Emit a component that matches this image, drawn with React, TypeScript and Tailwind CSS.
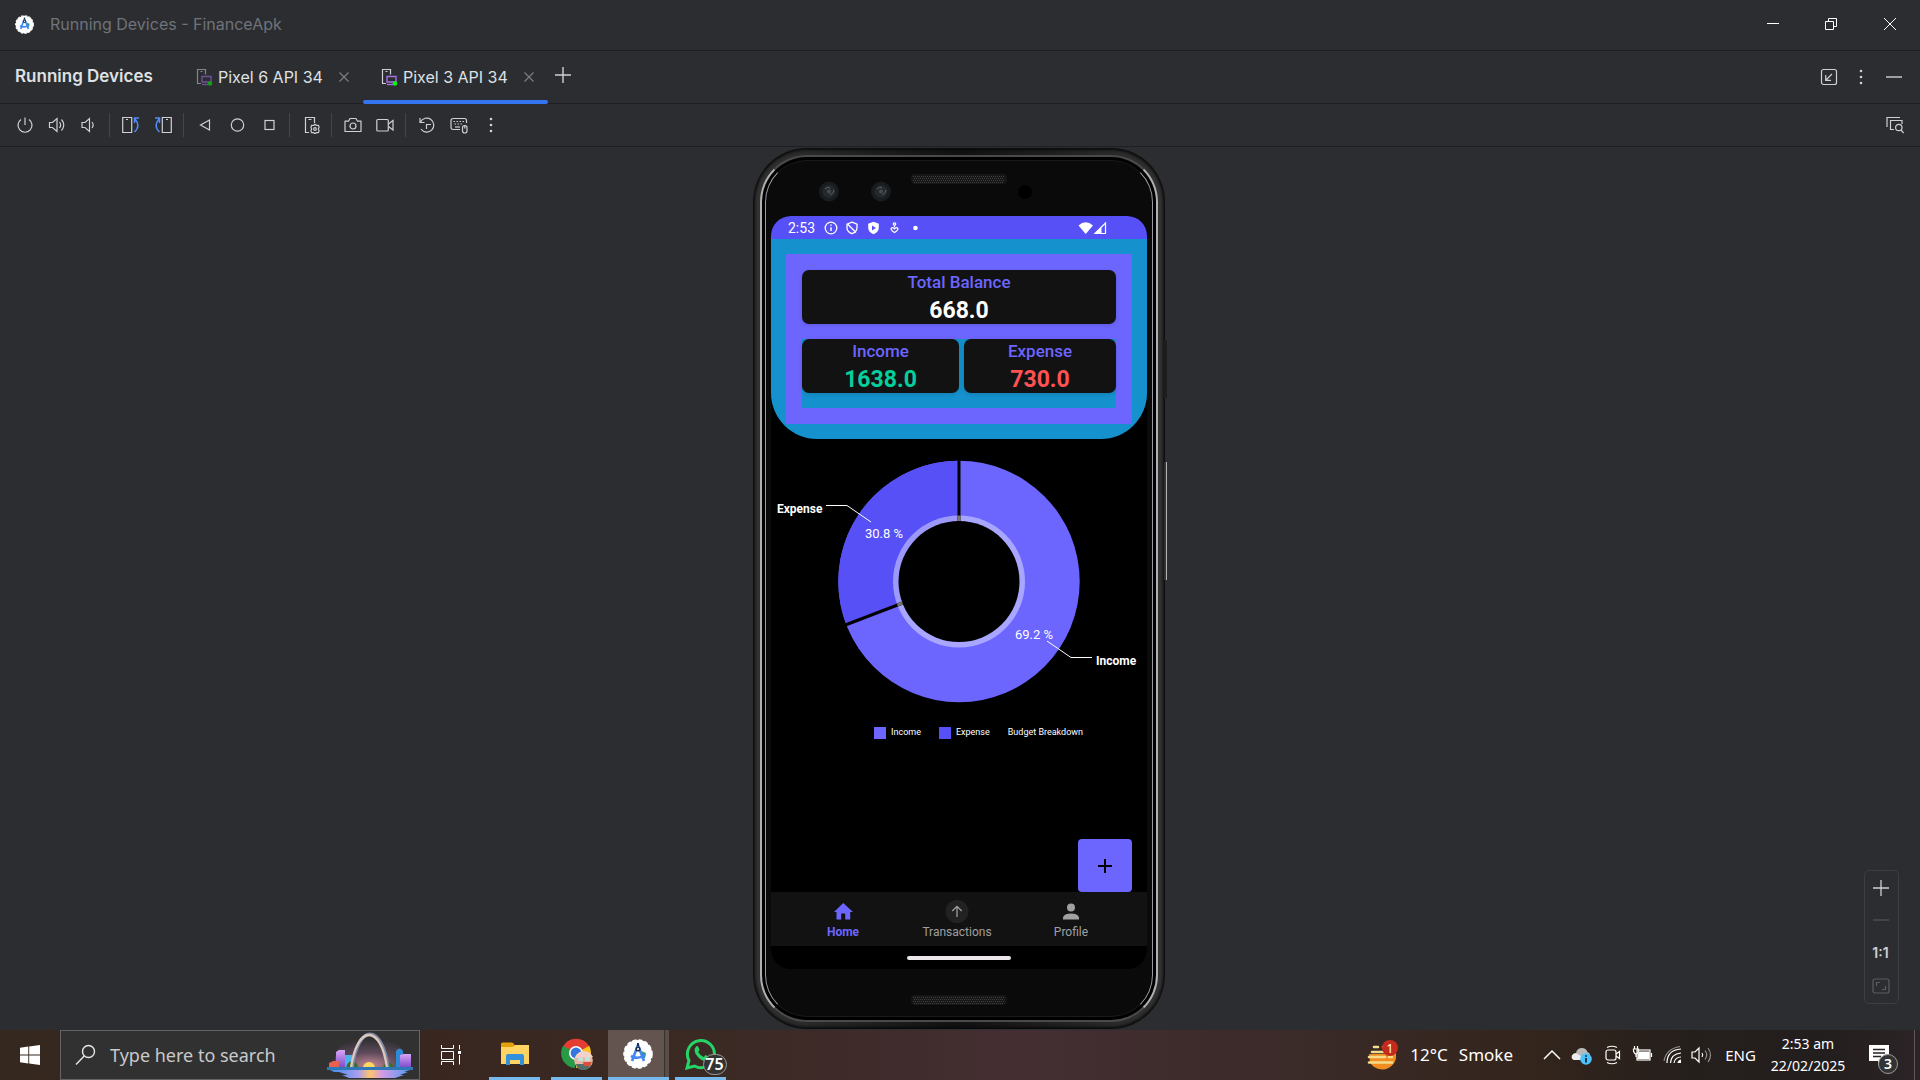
import React from "react";

type IconProps = { children: React.ReactNode; size?: number; className?: string };

function Icon({ children, size = 18, className = "" }: IconProps) {
  return (
    <svg
      width={size}
      height={size}
      viewBox="0 0 18 18"
      fill="none"
      stroke="currentColor"
      strokeWidth="1.2"
      className={className}
      aria-hidden="true"
    >
      {children}
    </svg>
  );
}

function StudioLogo({ size }: { size: number }) {
  return (
    <svg width={size} height={size} viewBox="0 0 30 30" aria-hidden="true">
      <circle cx="15" cy="15" r="14" fill="#fff" />
      <circle cx="15" cy="15" r="14" fill="none" stroke="#fff" strokeWidth="1.6" strokeDasharray="4 2" />
      <path d="M18 12l5 2-1 5-3 1z" fill="#2f9e62" />
      <path d="M15 6L9 22M15 6l6 16M8 17q7 4 14-1" fill="none" stroke="#4285f4" strokeWidth="2.6" />
      <circle cx="15" cy="10" r="2.6" fill="#22324d" />
      <circle cx="15" cy="10" r="1.1" fill="#fff" />
      <path d="M15 4v3" stroke="#22324d" strokeWidth="2" />
    </svg>
  );
}

/* ---------- window chrome ---------- */

function TitleBar() {
  return (
    <header className="flex h-[51px] items-center border-b border-[#1e1f22] pb-[2px] pl-[15px]">
      <StudioLogo size={19} />
      <h1 className="ml-4 text-base text-[#6f737a]">Running Devices - FinanceApk</h1>
      <div className="ml-auto flex items-center text-white">
        <button aria-label="Minimize" className="flex w-[58px] justify-center">
          <svg width="12" height="12" viewBox="0 0 12 12" stroke="currentColor" shapeRendering="crispEdges"><path d="M0 5.500h12" /></svg>
        </button>
        <button aria-label="Restore" className="flex w-[58px] justify-center">
          <svg width="12" height="12" viewBox="0 0 12 12" fill="none" stroke="currentColor"><path d="M.5 3.500h8v8h-8zM3.500 3.500v-3h8v8h-3" /></svg>
        </button>
        <button aria-label="Close" className="flex w-[60px] justify-center">
          <svg width="12" height="12" viewBox="0 0 12 12" stroke="currentColor"><path d="M0 0l12 12M12 0L0 12" /></svg>
        </button>
      </div>
    </header>
  );
}

function DeviceTab({ label, active }: { label: string; active?: boolean }) {
  return (
    <div className={active ? "relative flex w-[185px] items-center pl-[18px] pr-[14px]" : "flex w-[185px] items-center pl-[18px] pr-[14px]"}>
      <button role="tab" aria-selected={!!active} className="flex items-center gap-1 text-base text-[#dfe1e5]">
        <Icon className={active ? "text-[#ced0d6]" : "text-[#ced0d6] opacity-55"}>
          <path d="M5 15.500H1.500v-14h8v5M4.500 3.500h2" />
          <path d="M6 8.500h9v5.500H6z" stroke="#a571e6" strokeWidth="1.400" />
          <path d="M6 16.500h6" stroke="#a571e6" strokeWidth="1.400" />
          <circle cx="14" cy="15.500" r="2.200" fill="#0f0" stroke="none" />
        </Icon>
        {label}
      </button>
      <button aria-label={`Close ${label}`} className="ml-auto text-[#7a7d83]">
        <svg width="10" height="10" viewBox="0 0 10 10" stroke="currentColor" strokeWidth="1.200"><path d="M.5.500l9 9M9.500.500l-9 9" /></svg>
      </button>
      {active && <span className="absolute inset-x-0 -bottom-px h-1 rounded-full bg-[#3574f0]" />}
    </div>
  );
}

function Dots() {
  return (
    <Icon>
      <g fill="currentColor" stroke="none">
        <circle cx="9" cy="3" r="1.300" /><circle cx="9" cy="9" r="1.300" /><circle cx="9" cy="15" r="1.300" />
      </g>
    </Icon>
  );
}

function TabBar() {
  return (
    <div className="flex h-[53px] items-stretch border-b border-[#1e1f22] text-[#ced0d6]">
      <h2 className="flex w-[178px] items-center pl-[15px] text-[17px] font-semibold text-[#dfe1e5]">Running Devices</h2>
      <div role="tablist" className="flex">
        <DeviceTab label="Pixel 6 API 34" />
        <DeviceTab label="Pixel 3 API 34" active />
      </div>
      <button aria-label="Add device" className="ml-[7px] pb-1">
        <svg width="16" height="16" viewBox="0 0 16 16" stroke="currentColor" strokeWidth="1.400"><path d="M8 0v16M0 8h16" /></svg>
      </button>
      <div className="ml-auto flex items-center pb-px pr-[9px]">
        <button aria-label="Dock window" className="flex w-8 justify-center">
          <Icon><rect x="1.500" y="1.500" width="15" height="15" rx="2" /><path d="M12 6l-6 6M5.700 7v5.300H11" /></Icon>
        </button>
        <button aria-label="Options" className="flex w-8 justify-center"><Dots /></button>
        <button aria-label="Hide" className="flex w-[34px] justify-center">
          <Icon><path d="M1 9h16" strokeWidth="2" opacity=".7" /></Icon>
        </button>
      </div>
    </div>
  );
}

function Tool({ label, children }: { label: string; children: React.ReactNode }) {
  return (
    <button aria-label={label} className="flex w-8 justify-center">
      <Icon>{children}</Icon>
    </button>
  );
}

function Divider() {
  return <span className="ml-1 mr-[5px] h-6 w-px bg-[#43454a]" />;
}

function Toolbar() {
  return (
    <div role="toolbar" className="flex h-[43px] items-center border-b border-[#1e1f22] pl-[9px] pr-[9px] text-[#ced0d6]">
      <Tool label="Power"><path d="M9 1.500v7.500M5 3.500a7 7 0 1 0 8 0" /></Tool>
      <Tool label="Volume up"><path d="M1.500 6.500h3l4.500-4v13l-4.500-4h-3zM11.500 6q2.300 3 0 6M13.500 3.500q4.500 5.500 0 11" /></Tool>
      <Tool label="Volume down"><path d="M2 6.500h3l4.500-4v13l-4.500-4H2zM12 6q2.300 3 0 6" /></Tool>
      <Divider />
      <Tool label="Rotate left">
        <path d="M.700 1.500h9v15h-9zM4 3.500h2" />
        <path d="M12.500 16q6.500-6 .5-13M12.500 7V2h4.500" stroke="#548af7" strokeWidth="1.500" />
      </Tool>
      <Tool label="Rotate right">
        <path d="M8.300 1.500h9v15h-9zM12 3.500h2" />
        <path d="M5.500 16q-6.500-6-.5-13M5.500 7V2H1" stroke="#548af7" strokeWidth="1.500" />
      </Tool>
      <Divider />
      <Tool label="Back"><path d="M13.500 4v10l-9-5z" /></Tool>
      <Tool label="Home"><circle cx="9.500" cy="9" r="6.200" /></Tool>
      <Tool label="Overview"><rect x="5" y="4.500" width="9" height="9" /></Tool>
      <Divider />
      <Tool label="Device settings">
        <path d="M7 16.500H3.500v-15h9V7M6.500 3.500h3" />
        <path d="M13 8.200l1.500 1.300 2-.2.600 2-.8 1.700.8 1.700-.6 2-2-.2L13 17.800l-1.500-1.300-2 .2-.6-2 .8-1.700-.8-1.700.6-2 2 .2z" strokeLinejoin="round" />
        <circle cx="13" cy="13" r="1.300" />
      </Tool>
      <Divider />
      <Tool label="Screenshot">
        <path d="M1 5.200h3.500L6 2.500h6l1.500 2.700H17v10.300H1z" strokeLinejoin="round" /><circle cx="9" cy="10" r="3" />
      </Tool>
      <Tool label="Record"><rect x=".800" y="3.500" width="11.500" height="11.500" rx="1" /><path d="M12.500 8l4.500-3.500v9.500l-4.500-3.500" /></Tool>
      <Divider />
      <Tool label="Snapshots"><path d="M2 2v4.500h4.500M2.500 6A7 7 0 1 1 3 13M8.500 13V8.500H13" /></Tool>
      <Tool label="Hardware input">
        <path d="M10 13.500H3a2 2 0 0 1-2-2v-7a2 2 0 0 1 2-2h11.500a2 2 0 0 1 2 2V7" />
        <path d="M3.500 5.500h11M4.500 8h8" strokeDasharray="1.500 1.500" /><path d="M5 11h5" />
        <rect x="12.500" y="9.500" width="4.500" height="7.500" rx="2.200" /><path d="M14.800 9.500v3" />
      </Tool>
      <Tool label="More"><Dots /></Tool>
      <div className="ml-auto">
        <Tool label="UI check">
          <path d="M1 11V1.500h13M8 13.500H4.500v-9h11.500V8" /><circle cx="12.800" cy="11.500" r="3.200" /><path d="M15 14l2.700 3" />
        </Tool>
      </div>
    </div>
  );
}

/* ---------- phone ---------- */

function StatusBar() {
  return (
    <div className="flex h-[23px] items-center bg-[#5650f6] pl-[17px] pr-[39px] text-white">
      <span className="w-[35px] text-sm leading-none">2:53</span>
      <svg width="114" height="16" viewBox="0 0 114 16" fill="none" stroke="currentColor" strokeWidth="1.300" aria-hidden="true">
        <circle cx="8" cy="8" r="5.800" /><path d="M8 7.200v3.800M8 4.500v1.300" strokeWidth="1.500" />
        <path d="M29 2.200l5 2v3.500q0 4-5 6-5-2-5-6V4.200zM25 4.500l8 8" />
        <path d="M50.500 1.800l5.300 2v4q0 4.200-5.300 6.400-5.300-2.200-5.300-6.400v-4z" fill="currentColor" stroke="none" />
        <path d="M49 5.500v5l4-2.500z" fill="#5650f6" stroke="none" />
        <circle cx="71.500" cy="4" r="1.200" /><path d="M71.500 5.500v2M71.500 9q-2-2.500-3.500-.5 0 2 3.500 4 3.500-2 3.500-4-1.500-2-3.500.5z" strokeWidth="1.100" />
        <circle cx="92.500" cy="8" r="2.300" fill="currentColor" stroke="none" />
      </svg>
      <svg className="ml-auto" width="30" height="14" viewBox="0 0 30 14" fill="none" stroke="currentColor" aria-hidden="true">
        <path d="M.5 4.500q7-6.500 14.500 0L7.700 13z" fill="currentColor" stroke="none" />
        <path d="M17 12.500h10.500V2z" strokeWidth="1.200" /><path d="M17 12.500h6V7z" fill="currentColor" />
      </svg>
    </div>
  );
}

function AmountCard({ label, value, tone }: { label: string; value: string; tone: string }) {
  return (
    <div className="h-[54px] rounded-[7px] bg-[#121212] text-center shadow-[0_1px_4px_rgba(0,0,0,0.150)]">
      <div className="text-[17px] font-medium leading-6 text-[#6c66ff]">{label}</div>
      <div className={`text-[23px] font-bold leading-[33px] ${tone}`}>{value}</div>
    </div>
  );
}

function BudgetChart() {
  return (
    <svg viewBox="0 0 376 280" className="block w-full text-white" role="img" aria-label="Budget breakdown">
      <circle cx="188" cy="142.500" r="120.700" fill="#6c66ff" />
      <path d="M188 142.500V21.800A120.700 120.700 0 0 0 75.300 185.600z" fill="#5650f6" />
      <circle cx="188" cy="142.500" r="66" fill="#fff" fillOpacity=".42" />
      <path d="M188 142.500V21M188 142.500L73 186.500" stroke="#000" strokeWidth="3" />
      <path d="M188 142.500V76.500M188 142.500l-61.600 23.600" stroke="#77756f" strokeWidth="3" />
      <circle cx="188" cy="142.500" r="60.500" fill="#000" />
      <path d="M55 66.500h21l24 16.500M276 202l24 16.500h21" fill="none" stroke="#fff" />
      <g fill="currentColor">
        <text x="6" y="74" fontSize="12" fontWeight="700">Expense</text>
        <text x="325" y="226" fontSize="12" fontWeight="700">Income</text>
        <text x="94" y="99" fontSize="13">30.8 %</text>
        <text x="244" y="200" fontSize="13">69.2 %</text>
      </g>
    </svg>
  );
}

function Speaker() {
  return (
    <g>
      <rect width="96" height="10" rx="4" fill="#161616" />
      <path d="M2 2.500h92M3 4.500h90M2 6.500h92M3 8.500h90" stroke="#404040" strokeWidth="1" strokeDasharray="1 1" />
    </g>
  );
}

function PhoneTop() {
  return (
    <svg viewBox="0 0 376 55" className="block w-full" aria-hidden="true">
      {[58, 110].map((x) => (
        <g key={x}>
          <circle cx={x} cy="30.500" r="10" fill="#171c20" />
          <circle cx={x} cy="30.500" r="6.500" fill="#24292e" />
          <path d={`M${x - 4} 28q3-3 5-1M${x + 1} 34q4-2 4-5`} stroke="#596067" fill="none" />
          <circle cx={x} cy="30.500" r="2" fill="#454b51" />
        </g>
      ))}
      <circle cx="254" cy="31" r="7" fill="#000" />
      <g transform="translate(140 13)"><Speaker /></g>
    </svg>
  );
}

function NavItem({ label, active, children }: { label: string; active?: boolean; children: React.ReactNode }) {
  return (
    <button className={active ? "flex w-[114px] flex-col items-center pt-2 text-xs font-bold text-[#6c66ff]" : "flex w-[114px] flex-col items-center pt-2 text-xs text-[#a0a0a0]"}>
      <svg width="24" height="24" viewBox="0 0 24 24" fill="currentColor" aria-hidden="true">{children}</svg>
      {label}
    </button>
  );
}

function Phone() {
  return (
    <div className="relative mr-[2px] w-[412px] rounded-[54px] bg-gradient-to-r from-[#333] via-[#111] to-[#333] p-[7px] shadow-[inset_0_0_3px_2px_#0a0a0a]">
      <span className="absolute -right-[2px] top-[192px] h-[58px] w-[3px] bg-[#1d1d1e]" />
      <span className="absolute -right-[2px] top-[314px] h-[118px] w-[3px] border-r border-[#b3b3b3] bg-[#333]" />
      <div className="rounded-[47px] border-2 border-x-[#b0b0b0] border-y-[#4a4a4a] bg-black p-[3px]">
        <div className="rounded-[42px] border border-x-[#9a9aa3] border-y-[#1a1a1a] bg-[#0a0a0a] px-[5px]">
          <PhoneTop />
          <div className="flex h-[753px] flex-col overflow-hidden rounded-[20px] bg-black font-['Roboto',sans-serif]">
            <StatusBar />
            <section className="overflow-hidden rounded-b-[46px] bg-[#1591cd] p-[15px]">
              <div className="flex flex-col gap-[15px] bg-[#6c66ff] p-4">
                <AmountCard label="Total Balance" value="668.0" tone="text-white" />
                <div className="grid grid-cols-[157fr_152fr] gap-[5px] bg-[#1591cd] pb-[15px]">
                  <AmountCard label="Income" value="1638.0" tone="text-[#05cf9c]" />
                  <AmountCard label="Expense" value="730.0" tone="text-[#ff5252]" />
                </div>
              </div>
            </section>
            <BudgetChart />
            <ul className="flex h-7 items-center gap-[18px] pl-[103px] text-[9px] text-white">
              <li className="flex items-center gap-[5px]"><span className="size-3 bg-[#6c66ff]" />Income</li>
              <li className="flex items-center gap-[5px]"><span className="size-3 bg-[#5650f6]" />Expense</li>
              <li>Budget Breakdown</li>
            </ul>
            <div className="mt-auto flex justify-end pr-[15px]">
              <button aria-label="Add transaction" className="flex h-[53px] w-[54px] items-center justify-center rounded-[4px] bg-[#6c66ff] text-black">
                <svg width="14" height="14" viewBox="0 0 14 14" stroke="currentColor" strokeWidth="2"><path d="M7 0v14M0 7h14" /></svg>
              </button>
            </div>
            <nav className="flex h-[54px] items-start justify-center bg-[#121212] pr-1">
              <NavItem label="Home" active><path d="M10.200 19.500v-6h4v6h5V12h2.800L12.200 3 3 12h2.500v7.500z" /></NavItem>
              <NavItem label="Transactions">
                <circle cx="12" cy="11.500" r="11.500" fill="#222" />
                <path d="M12 17V6.500M7.300 11L12 6.300l4.700 4.700" fill="none" stroke="currentColor" strokeWidth="1.300" />
              </NavItem>
              <NavItem label="Profile"><circle cx="12" cy="7.500" r="4" /><path d="M4 19.500v-2q1-4 8-4t8 4v2z" /></NavItem>
            </nav>
            <div className="flex h-[23px] items-center justify-center"><span className="h-1 w-[104px] rounded-full bg-[#ece6ea]" /></div>
          </div>
          <svg viewBox="0 0 376 47" className="block w-full" aria-hidden="true"><g transform="translate(140 26)"><Speaker /></g></svg>
        </div>
      </div>
    </div>
  );
}

function ZoomControls() {
  return (
    <div className="absolute bottom-[26px] right-[21px] flex w-[35px] flex-col items-center rounded-[5px] border border-[#3c3e41] pb-[2px] pr-[2px] text-[#ced0d6]">
      <button aria-label="Zoom in" className="flex h-[34px] items-center">
        <svg width="16" height="16" viewBox="0 0 16 16" stroke="currentColor" strokeWidth="1.300"><path d="M8 0v16M0 8h16" /></svg>
      </button>
      <button aria-label="Zoom out" className="flex h-[30px] items-center text-[#5a5d63]">
        <svg width="16" height="2" viewBox="0 0 16 2" stroke="currentColor"><path d="M0 1h16" /></svg>
      </button>
      <button className="h-9 text-sm font-semibold">1:1</button>
      <button aria-label="Fit to screen" className="flex h-[30px] items-center text-[#5a5d63]">
        <Icon><rect x="1" y="2" width="16" height="14" rx="2" /><path d="M4.500 9V5.500H8M10 12.500h3.500V9" /></Icon>
      </button>
    </div>
  );
}

/* ---------- taskbar ---------- */

function ArchArt() {
  return (
    <svg width="88" height="46" viewBox="0 0 88 46" aria-hidden="true">
      <defs>
        <radialGradient id="glow" cx=".5" cy=".95" r=".8"><stop offset="0" stopColor="#c58a92" /><stop offset=".5" stopColor="#5e4a5c" /><stop offset="1" stopColor="#313132" /></radialGradient>
        <linearGradient id="water"><stop offset="0" stopColor="#3f8de8" /><stop offset=".35" stopColor="#a79cf0" /><stop offset=".5" stopColor="#ffc56b" /><stop offset=".65" stopColor="#d59ae6" /><stop offset="1" stopColor="#4f9cf0" /></linearGradient>
        <linearGradient id="tower" x2="0" y2="1"><stop offset="0" stopColor="#d7a5f5" /><stop offset="1" stopColor="#7a46c9" /></linearGradient>
      </defs>
      <path d="M8 35Q8 3 44 3t36 32z" fill="url(#glow)" />
      <path d="M18 23h8v13h-8z" fill="#4db0ec" />
      <path d="M10 20l3-2h6v18h-9z" fill="url(#tower)" />
      <path d="M3 31l4-2h6v7H3z" fill="#e8604e" />
      <path d="M70 19q3.500-5 7 0v17h-7z" fill="#2f8ad6" />
      <path d="M74 23l4-1h7v14H74z" fill="url(#tower)" />
      <path d="M20 36q1-6 6-7 6 1 6 7zM57 36q1-5 5-6 5 1 6 6z" fill="#3c6b2c" />
      <circle cx="43" cy="36" r="6" fill="#ffd75e" />
      <path d="M26 36C32-9 56-9 62 36" fill="none" stroke="#7d8aa6" strokeWidth="3.500" />
      <path d="M25 36C31-8 55-8 61 36" fill="none" stroke="#dcc9bd" strokeWidth="2.300" />
      <path d="M1 35h86v3H1z" fill="#2e78b5" />
      <path d="M4 38h80l-6 2h4l-8 3h4l-9 3H23l-7-3h6l-9-3h-5z" fill="url(#water)" />
    </svg>
  );
}

function TaskApp({ label, width, children }: { label: string; width: string; children: React.ReactNode }) {
  return (
    <button aria-label={label} className={`flex h-full items-center justify-center border-b-[3px] border-[#76b9ed] ${width}`}>
      {children}
    </button>
  );
}

function Tray({ label, children }: { label: string; children: React.ReactNode }) {
  return (
    <button aria-label={label} className="flex w-[30px] justify-center">
      <svg width="22" height="20" viewBox="0 0 22 20" fill="none" stroke="currentColor" strokeWidth="1.200" aria-hidden="true">{children}</svg>
    </button>
  );
}

function Taskbar() {
  return (
    <footer className="flex h-[50px] items-center bg-[linear-gradient(90deg,#35281f_0%,#38261f_20%,#3b2924_38%,#442e32_53%,#3a2a28_68%,#33251c_80%,#251f1c_88%,#231e1e_95%,#2c2426_100%)] font-['Noto_Sans',sans-serif] text-white">
      <button aria-label="Start" className="flex w-[60px] justify-center">
        <svg width="20" height="20" viewBox="0 0 20 20" fill="currentColor"><path d="M0 2.800l8.300-1.200v8H0zM9.200 1.400L20 0v9.600H9.200zM0 10.500h8.300v8L0 17.300zM9.200 10.500H20V20L9.200 18.600z" /></svg>
      </button>
      <label className="flex h-full w-[360px] items-center border border-[#636363] bg-[#313132] pl-[14px] pr-[5px]">
        <svg width="22" height="22" viewBox="0 0 22 22" fill="none" stroke="#e8e8e8" strokeWidth="1.400" aria-hidden="true"><circle cx="13.500" cy="7.500" r="6" /><path d="M9.200 12L1 20.500" /></svg>
        <input aria-label="Search" placeholder="Type here to search" className="ml-[13px] min-w-0 flex-1 bg-transparent text-[18px] text-white outline-none placeholder:text-[#c9c9c9]" />
        <ArchArt />
      </label>
      <button aria-label="Task view" className="flex w-[61px] justify-center">
        <svg width="20" height="20" viewBox="0 0 20 20" fill="none" stroke="currentColor"><path d="M.5 0v3.500h12V0M.5 6.500h12v8H.5zM.5 20v-3.500h12V20M18.500 0v4.500M18.500 10v9.500" /><path d="M17 6h3v3h-3z" fill="currentColor" stroke="none" /></svg>
      </button>
      <div className="flex h-full gap-[6px] pl-2">
        <div className="mr-[5px] flex">
          <TaskApp label="File Explorer" width="w-[51px]">
            <svg width="28" height="24" viewBox="0 0 28 24"><path d="M0 2q0-1.500 1.500-1.500H11q1 0 2 1.500l1 2v3H0z" fill="#e3a20c" /><path d="M0 5h12l2-2h14v19H0z" fill="#ffd463" /><path d="M5 23V14q0-2 2-2h14q2 0 2 2v9h-4v-5H9v5z" fill="#3390dc" /></svg>
          </TaskApp>
        </div>
        <TaskApp label="Chrome" width="w-[51px]">
          <svg width="32" height="32" viewBox="0 0 32 32">
            <path d="M15 15L2 8.500A15 15 0 0 1 28 8z" fill="#e53d32" />
            <path d="M15 15l13.200-7.200A15 15 0 0 1 15 30z" fill="#fcc31e" />
            <path d="M15 15l-1 15A15 15 0 0 1 2 7.700z" fill="#2a9a49" />
            <circle cx="15" cy="15" r="7" fill="#fff" /><circle cx="15" cy="15" r="5.400" fill="#3475e0" />
            <circle cx="22.500" cy="22.500" r="9.300" fill="#e9b5a6" /><path d="M14 20q3-7 9-7t9 6z" fill="#f3d2cc" /><path d="M15 26h15q-2 6-8 6t-7-6z" fill="#4f6f68" /><path d="M17 20h5v3h-5zM24 19h5v4h-5z" fill="#bfe3dd" /><path d="M22 24h9l-2 4h-6z" fill="#d8503f" />
          </svg>
        </TaskApp>
        <div className="flex border-b-[3px] border-[#76b9ed] bg-[#63544f]">
          <button aria-label="Android Studio" className="flex w-[57px] items-center justify-center border-r border-[#37312f] pl-1"><StudioLogo size={30} /></button>
          <span className="w-1 bg-[#5a4d49]" />
        </div>
        <TaskApp label="WhatsApp, 75 unread" width="w-[51px]">
          <span className="relative flex">
            <svg width="32" height="32" viewBox="0 0 32 32" fill="none">
              <path d="M2 30l2-7.500A13.500 13.500 0 1 1 9.500 28z" stroke="#25d366" strokeWidth="3" />
              <path d="M11 8.500q1.500-1 2.300.5l1.200 2.800q0 1-1.300 2.200 2 3.600 5.500 5l1.800-2 3.500 1.800q.5 3.500-3.500 4.200-4 0-8-4.500-5-5.500-1.500-10z" fill="#25d366" />
            </svg>
            <span className="absolute left-[18px] top-4 flex h-[21px] w-6 items-center justify-center rounded-full border border-[#9b9b9b] bg-[#333] text-base font-semibold">75</span>
          </span>
        </TaskApp>
      </div>

      <div className="ml-auto flex h-full items-center">
        <button className="flex items-center gap-[11px] text-[17px]">
          <svg width="32" height="32" viewBox="0 0 32 32" aria-hidden="true">
            <path d="M2 15h27q1 7-4 11.500-5 4.500-10 4-9-.5-12-7.500z" fill="#f08c20" />
            <path d="M18 11h11v5H18z" fill="#f7a23c" />
            <path d="M7 8h4M16 8h5M5 13h14M2 18h16M22 18h3M2 23.500h23" stroke="#f4dc8b" strokeWidth="2.600" strokeLinecap="round" />
            <circle cx="23" cy="9" r="8" fill="#c42b1c" />
            <text x="23" y="13.500" fontSize="12" textAnchor="middle" fill="#fff">1</text>
          </svg>
          <span>12°C</span>
          <span>Smoke</span>
        </button>
        <div className="ml-[24px] flex items-center">
          <Tray label="Show hidden icons"><path d="M3 14l8-8 8 8" strokeWidth="1.500" /></Tray>
          <Tray label="OneDrive">
            <path d="M3 15q-3-1-2-4.500 1-2.500 4-2.500 1-5 6-5 4 0 5.500 4 3 1 2.500 5l-4 3z" fill="#b9b9b9" stroke="none" /><path d="M3 15q-3-1-2-4.500 2-3 5-2l6 4v2.500z" fill="#ededed" stroke="none" />
            <circle cx="15" cy="14" r="5.800" fill="#4cc2ff" stroke="none" /><path d="M15 13v4.500M15 10.200v1.600" stroke="#10202c" strokeWidth="1.700" />
          </Tray>
          <Tray label="Meet Now"><rect x="5" y="5" width="10" height="10" rx="2" /><path d="M15 9l3.500-2.500v7L15 11M6 2.500q5-2.500 10 0M6 17.500q5 2.500 10 0" /></Tray>
          <Tray label="Battery"><rect x="6" y="5" width="13" height="10" /><path d="M8 7h10v6.500H7z" fill="currentColor" /><path d="M20.500 8v4M3.500 1v3M6.500 1v3M2.500 4h5v2q-1 3-2.500 3T2.500 6zM5 9v3" /></Tray>
          <Tray label="Network"><path d="M6 18Q6 5 20 4M9.500 18Q10 9 20 8M13 18q1-6 7-6" /><path d="M16.500 18q0-2.500 3.500-3.500v3.500z" fill="currentColor" stroke="none" /><path d="M3 16Q5 4 19 1.500" opacity=".5" /></Tray>
          <Tray label="Volume"><path d="M1 7h3l4-4v14l-4-4H1zM11 8q1.500 2 0 4" /><path d="M14 5.500q3.500 4.500 0 9M17 3q5 7 0 14" opacity=".5" /></Tray>
        </div>
        <button className="ml-[7px] w-[33px] text-[15px]">ENG</button>
        <button className="ml-[9px] flex w-[84px] flex-col text-center text-sm leading-[22px]">
          <span>2:53 am</span>
          <span>22/02/2025</span>
        </button>
        <button aria-label="3 notifications" className="relative ml-[19px] flex w-[45px]">
          <svg width="20" height="21" viewBox="0 0 20 21"><path d="M0 0h20v16h-7l-4 5v-5H0z" fill="#fff" /><path d="M4 4.500h12M4 8h12M4 11.500h8" stroke="#2a2323" strokeWidth="1.300" /></svg>
          <span className="absolute left-[9px] top-[9px] flex size-5 items-center justify-center rounded-full border border-[#9b9b9b] bg-[#333] text-sm font-semibold">3</span>
        </button>
        <span className="mr-[5px] h-full w-px bg-[#5d5758]" />
      </div>
    </footer>
  );
}

export default function App() {
  return (
    <div className="flex min-h-screen flex-col bg-[#2b2d30] font-['Inter',sans-serif]">
      <TitleBar />
      <TabBar />
      <Toolbar />
      <main className="relative flex flex-1 items-center justify-center">
        <Phone />
        <ZoomControls />
      </main>
      <Taskbar />
    </div>
  );
}
